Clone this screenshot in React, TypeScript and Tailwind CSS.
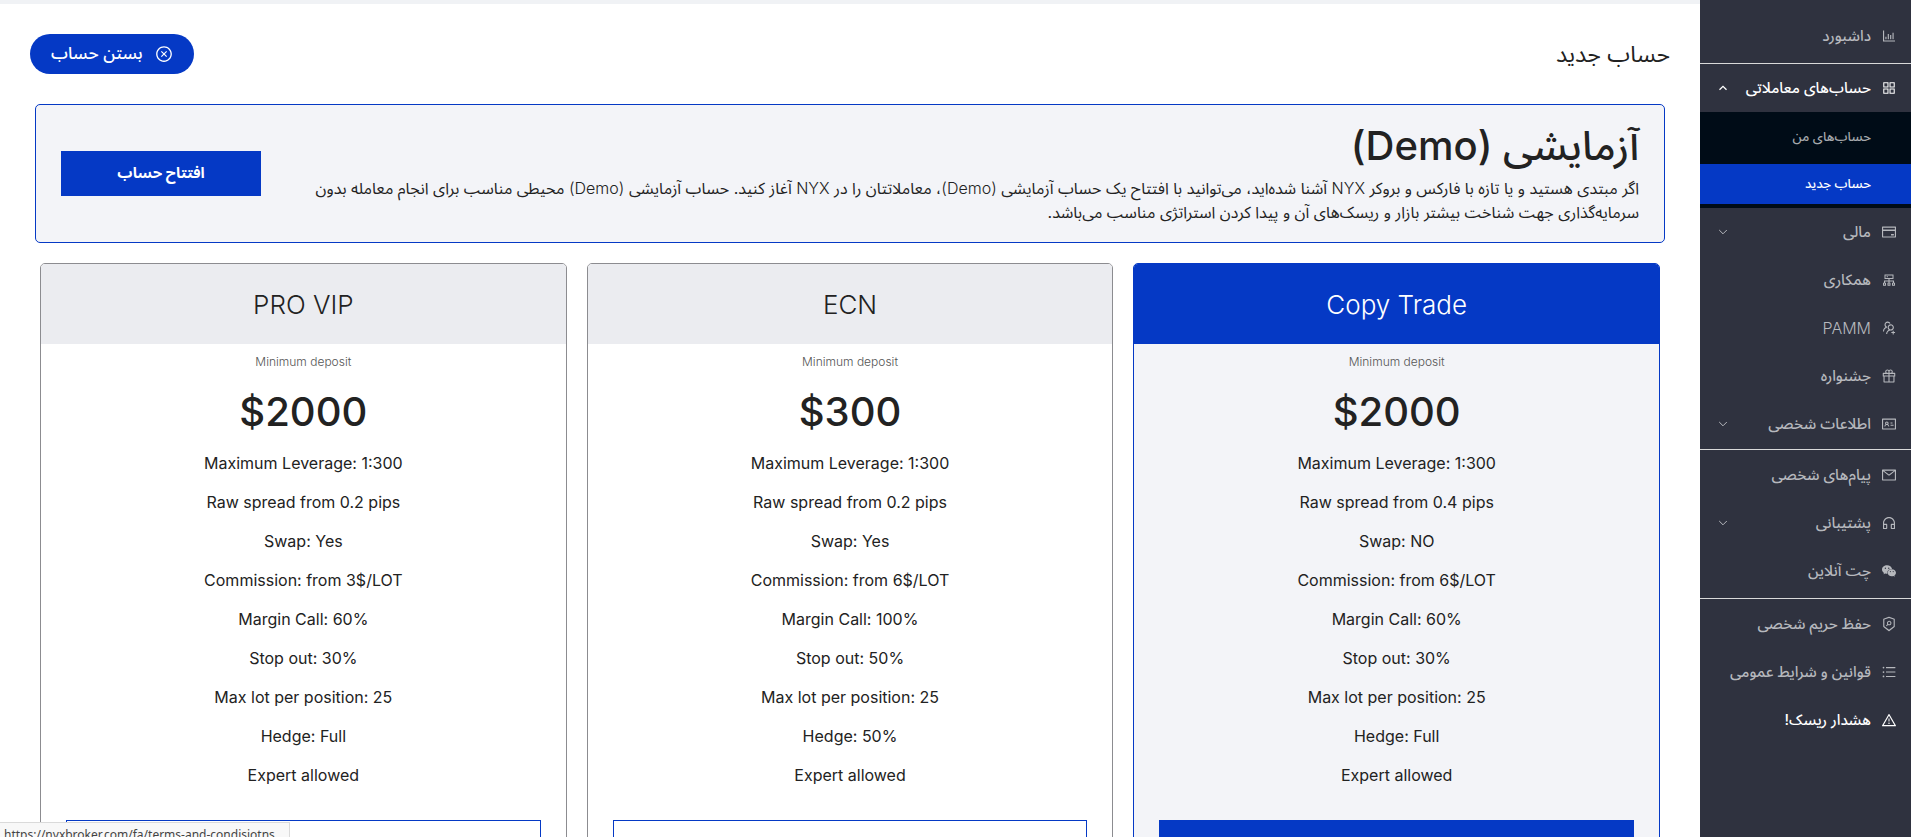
import type { IconType } from "react-icons";
import {
  AiOutlineAppstore,
  AiOutlineBarChart,
  AiOutlineCloseCircle,
  AiOutlineCluster,
  AiOutlineCreditCard,
  AiOutlineCustomerService,
  AiOutlineGift,
  AiOutlineIdcard,
  AiOutlineMail,
  AiOutlineSecurityScan,
  AiOutlineUnorderedList,
  AiOutlineUsergroupAdd,
  AiOutlineWarning,
  AiFillWechat,
} from "react-icons/ai";

interface MenuItem {
  label: string;
  icon: IconType;
  expandable?: boolean;
  highlighted?: boolean;
  latin?: boolean;
}

interface Plan {
  name: string;
  deposit: string;
  features: string[];
  featured?: boolean;
}

const financeMenu: MenuItem[] = [
  { label: "مالی", icon: AiOutlineCreditCard, expandable: true },
  { label: "همکاری", icon: AiOutlineCluster },
  { label: "PAMM", icon: AiOutlineUsergroupAdd, latin: true },
  { label: "جشنواره", icon: AiOutlineGift },
  { label: "اطلاعات شخصی", icon: AiOutlineIdcard, expandable: true },
];

const supportMenu: MenuItem[] = [
  { label: "پیام‌های شخصی", icon: AiOutlineMail },
  { label: "پشتیبانی", icon: AiOutlineCustomerService, expandable: true },
  { label: "چت آنلاین", icon: AiFillWechat },
];

const legalMenu: MenuItem[] = [
  { label: "حفظ حریم شخصی", icon: AiOutlineSecurityScan },
  { label: "قوانین و شرایط عمومی", icon: AiOutlineUnorderedList },
  { label: "هشدار ریسک!", icon: AiOutlineWarning, highlighted: true },
];

const plans: Plan[] = [
  {
    name: "Copy Trade",
    deposit: "$2000",
    featured: true,
    features: [
      "Maximum Leverage: 1:300",
      "Raw spread from 0.4 pips",
      "Swap: NO",
      "Commission: from 6$/LOT",
      "Margin Call: 60%",
      "Stop out: 30%",
      "Max lot per position: 25",
      "Hedge: Full",
      "Expert allowed",
    ],
  },
  {
    name: "ECN",
    deposit: "$300",
    features: [
      "Maximum Leverage: 1:300",
      "Raw spread from 0.2 pips",
      "Swap: Yes",
      "Commission: from 6$/LOT",
      "Margin Call: 100%",
      "Stop out: 50%",
      "Max lot per position: 25",
      "Hedge: 50%",
      "Expert allowed",
    ],
  },
  {
    name: "PRO VIP",
    deposit: "$2000",
    features: [
      "Maximum Leverage: 1:300",
      "Raw spread from 0.2 pips",
      "Swap: Yes",
      "Commission: from 3$/LOT",
      "Margin Call: 60%",
      "Stop out: 30%",
      "Max lot per position: 25",
      "Hedge: Full",
      "Expert allowed",
    ],
  },
];

function Chevron({ up }: { up?: boolean }) {
  return (
    <svg width="10" height="10" viewBox="0 0 10 10" fill="none" stroke="currentColor" aria-hidden="true">
      <path d={up ? "M1.5 6.8 5 3.3l3.5 3.5" : "M1.2 3 5 6.8 8.8 3"} strokeWidth={up ? 1.3 : 1} />
    </svg>
  );
}

function MenuLink({ label, icon: Icon, expandable, highlighted, latin }: MenuItem) {
  return (
    <a
      href="#"
      className={
        highlighted
          ? "flex h-10 items-center gap-[10px] pr-[14px] pl-[18px] text-white"
          : "flex h-10 items-center gap-[10px] pr-[14px] pl-[18px] text-[#b6b8bd]"
      }
    >
      <Icon size={16} className="shrink-0" />

      <span className={latin ? "grow text-base font-light" : "grow whitespace-nowrap"}>{label}</span>

      {expandable && <Chevron />}
    </a>
  );
}

function Sidebar() {
  return (
    <aside className="w-[211px] shrink-0 bg-[#2f323f] text-[15px] font-medium">
      <nav>
        <div className="border-b border-[#d9d9d9] pt-4 pb-[7px]">
          <MenuLink label="داشبورد" icon={AiOutlineBarChart} />
        </div>

        <a
          href="#"
          className="flex h-12 items-center gap-[10px] pr-[14px] pl-[18px] text-white"
        >
          <AiOutlineAppstore size={16} className="shrink-0" />

          <span className="grow whitespace-nowrap">حساب‌های معاملاتی</span>

          <Chevron up />
        </a>

        {/* Trading accounts submenu */}

        <div className="flex flex-col gap-[7px] bg-[#000c17] pt-[5px] pb-1 text-[13px]">
          <a href="#" className="flex h-10 items-center pr-10 text-[#a6a9ad]">
            حساب‌های من
          </a>

          <a href="#" className="flex h-10 items-center bg-[#0539c5] pr-10 text-white">
            حساب جدید
          </a>
        </div>

        <div className="flex flex-col gap-2 border-b border-[#d9d9d9] pt-1 pb-[5px]">
          {financeMenu.map((item) => (
            <MenuLink key={item.label} {...item} />
          ))}
        </div>

        <div className="flex flex-col gap-2 border-b border-[#d9d9d9] pt-[5px] pb-[7px]">
          {supportMenu.map((item) => (
            <MenuLink key={item.label} {...item} />
          ))}
        </div>

        <div className="flex flex-col gap-2 pt-[5px]">
          {legalMenu.map((item) => (
            <MenuLink key={item.label} {...item} />
          ))}
        </div>
      </nav>
    </aside>
  );
}

function PlanCard({ name, deposit, features, featured }: Plan) {
  return (
    <article
      className={
        featured
          ? "overflow-hidden rounded-[5px] border border-[#0539c5] bg-[#f3f4f8]"
          : "overflow-hidden rounded-[5px] border border-[#8c8c90] bg-white"
      }
    >
      <h2
        className={
          featured
            ? "flex h-20 items-center justify-center bg-[#0539c5] text-[26px] font-light text-white"
            : "flex h-20 items-center justify-center bg-[#ebecf0] text-[26px] font-light"
        }
      >
        {name}
      </h2>

      <div className="px-[25px] pt-2 pb-6 text-center" dir="ltr">
        <p className="text-xs leading-5 font-light text-[#555]">Minimum deposit</p>

        <p className="mt-4 text-[40px] leading-12 font-medium">{deposit}</p>

        <ul className="mt-[15px] flex flex-col gap-[15px] text-base leading-6">
          {features.map((feature) => (
            <li key={feature}>{feature}</li>
          ))}
        </ul>

        <button
          type="button"
          className={
            featured
              ? "mt-[33px] h-[52px] w-full bg-[#0539c5] text-[15px] font-bold text-white"
              : "mt-[33px] h-[52px] w-full border border-[#0539c5] bg-white text-[15px] font-bold text-[#0539c5]"
          }
        >
          افتتاح حساب
        </button>
      </div>
    </article>
  );
}

export default function App() {
  return (
    <div
      dir="rtl"
      className="flex h-screen overflow-hidden bg-white font-['Inter','Noto_Sans_Arabic','DejaVu_Sans',sans-serif] text-[#222]"
    >
      <Sidebar />

      <main className="min-w-0 grow border-t-4 border-[#f0f2f5] px-[30px] pt-[30px]">
        <header className="flex items-center justify-between">
          <h1 className="text-[23px] leading-10">حساب جدید</h1>

          <button
            type="button"
            className="flex h-10 items-center gap-3 rounded-full bg-[#0539c5] px-[21px] text-[17px] font-medium text-white"
          >
            <AiOutlineCloseCircle size={18} />
            بستن حساب
          </button>
        </header>

        {/* Demo account */}

        <section className="mx-[5px] mt-[30px] flex items-center justify-between rounded-[5px] border border-[#0539c5] bg-[#f3f4f8] px-[25px] py-[18px]">
          <div>
            <h2 className="mb-2 text-[40px] leading-[45px] font-medium">آزمایشی (Demo)</h2>

            <p className="text-base leading-6 whitespace-nowrap">
              اگر مبتدی هستید و یا تازه با فارکس و بروکر <span className="font-light">NYX</span> آشنا
              شده‌اید، می‌توانید با افتتاح یک حساب آزمایشی{" "}
              <span className="font-light">(Demo)</span>، معاملاتتان را در{" "}
              <span className="font-light">NYX</span> آغاز کنید. حساب آزمایشی{" "}
              <span className="font-light">(Demo)</span> محیطی مناسب برای انجام معامله بدون
              <br />
              سرمایه‌گذاری جهت شناخت بیشتر بازار و ریسک‌های آن و پیدا کردن استراتژی مناسب می‌باشد.
            </p>
          </div>

          <button
            type="button"
            className="h-[45px] w-[200px] shrink-0 bg-[#0539c5] text-[15px] font-bold text-white"
          >
            افتتاح حساب
          </button>
        </section>

        {/* Account plans */}

        <section className="mx-[10px] mt-5 grid grid-cols-3 gap-5">
          {plans.map((plan) => (
            <PlanCard key={plan.name} {...plan} />
          ))}
        </section>
      </main>

      {/* Link preview bubble */}

      <div
        dir="ltr"
        className="fixed bottom-0 left-0 h-[15px] w-[290px] overflow-hidden border-t border-r border-[#dadada] bg-[#f8f8f8] pl-1 font-['Noto_Sans',sans-serif] text-xs leading-6 whitespace-nowrap text-[#444]"
      >
        https://nyxbroker.com/fa/terms-and-condisiotns
      </div>
    </div>
  );
}
